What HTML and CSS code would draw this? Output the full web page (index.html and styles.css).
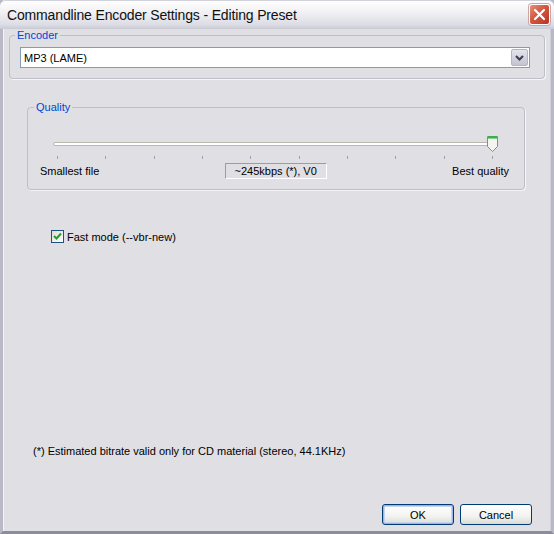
FILE: index.html
```html
<!DOCTYPE html>
<html lang="en">
<head>
    <meta charset="UTF-8">
    <title>Commandline Encoder Settings - Editing Preset</title>
    <link rel="stylesheet" href="styles.css">
</head>
<body>
    <div class="window">
        <div class="titlebar">
            <span class="title">Commandline Encoder Settings - Editing Preset</span>
            <span class="close">
                <svg width="13" height="13" viewBox="0 0 13 13">
                    <path d="M2 2 L11 11 M11 2 L2 11" stroke="#fff" stroke-width="2.2" stroke-linecap="round"/>
                </svg>
            </span>
        </div>

        <div class="client">
            <fieldset class="group encoder">
                <legend>Encoder</legend>
                <div class="combo">
                    <span class="combo-text">MP3 (LAME)</span>
                    <span class="combo-btn">
                        <svg width="9" height="6" viewBox="0 0 9 6">
                            <path d="M1 1 L4.5 4.5 L8 1" stroke="#3c3c50" stroke-width="2" fill="none"/>
                        </svg>
                    </span>
                </div>
            </fieldset>

            <fieldset class="group quality">
                <legend>Quality</legend>
                <div class="slider">
                    <div class="track"></div>
                    <span class="thumb">
                        <svg width="13" height="18" viewBox="0 0 13 18">
                            <path d="M1.5 1.5 H11.5 V11.5 L6.5 16.5 L1.5 11.5 Z" fill="#f4f4f0" stroke="#8a8a80"/>
                            <rect x="2" y="1" width="9" height="3" fill="#3fae4a"/>
                            <rect x="2" y="3" width="9" height="1" fill="#8ad48e"/>
                        </svg>
                    </span>
                </div>
                <div class="ticks">
                    <i></i><i></i><i></i><i></i><i></i><i></i><i></i><i></i><i></i><i></i>
                </div>
                <div class="labels">
                    <span>Smallest file</span>
                    <span class="value">~245kbps (*), V0</span>
                    <span>Best quality</span>
                </div>
            </fieldset>

            <label class="check">
                <span class="box">
                    <svg width="11" height="11" viewBox="0 0 11 11">
                        <path d="M2 5 L4.5 7.5 L9 2.5" stroke="#21a121" stroke-width="2" fill="none"/>
                    </svg>
                </span>
                Fast mode (--vbr-new)
            </label>

            <div class="note">(*) Estimated bitrate valid only for CD material (stereo, 44.1KHz)</div>

            <div class="buttons">
                <button class="button default">OK</button>
                <button class="button">Cancel</button>
            </div>
        </div>
    </div>
</body>
</html>
```

FILE: styles.css
```css
* {
    margin: 0;
    padding: 0;
    box-sizing: border-box;
}

body {
    background: #e0dfe3;
    font-family: "Liberation Sans", Arial, sans-serif;
    font-size: 11px;
    color: #000;
}

.window {
    width: 554px;
    height: 534px;
    display: flex;
    flex-direction: column;
    background: #e0dfe3;
    border-left: 3px solid #b9b9c6;
    border-right: 3px solid #b9b9c6;
    border-bottom: 3px solid #8c8c9c;
    box-shadow: inset 1px 0 0 #f4f4f8, inset -1px 0 0 #cfcfda;
}

/* title bar */
.titlebar {
    height: 29px;
    margin: 0 -3px;
    display: flex;
    align-items: center;
    justify-content: space-between;
    padding: 0 4px 1px 7px;
    background: linear-gradient(#ffffff 0%, #f1f1f4 40%, #dcdce4 85%, #c9c9d4 100%);
    border-top: 1px solid #d2d2dc;
    border-radius: 6px 6px 0 0;
}

.title {
    font-size: 14px;
    color: #101010;
    letter-spacing: -0.15px;
}

.close {
    width: 21px;
    height: 21px;
    display: flex;
    align-items: center;
    justify-content: center;
    border: 1px solid #fff;
    border-radius: 3px;
    background: linear-gradient(135deg, #e8907a 0%, #d5573f 45%, #b93323 100%);
    box-shadow: 0 0 0 1px #c9a6a6;
}

.client {
    flex: 1;
    display: flex;
    flex-direction: column;
    padding: 0 6px 6px 6px;
}

/* group boxes */
.group {
    border: 1px solid #bebec8;
    border-radius: 4px;
    box-shadow: 1px 1px 0 #f6f6f8;
}

.group legend {
    color: #0046d5;
    padding: 0 2px;
    margin-left: -5px;
    line-height: 13px;
}

.encoder {
    padding: 5px 14px 10px 10px;
}

.combo {
    height: 21px;
    display: flex;
    align-items: center;
    background: #fff;
    border: 1px solid #7f9db9;
    padding: 0 1px 0 3px;
}

.combo-text {
    flex: 1;
}

.combo-btn {
    width: 17px;
    height: 17px;
    display: flex;
    align-items: center;
    justify-content: center;
    border-radius: 2px;
    background: linear-gradient(#e4e4ec, #c4c4d2);
    border: 1px solid #b4b4c4;
}

.quality {
    margin: 22px 20px 0 18px;
    padding: 21px 15px 10px 12px;
}

.quality legend {
    margin-left: -6px;
}

.slider {
    position: relative;
    height: 18px;
    margin: 0 12px 0 13px;
    display: flex;
    align-items: center;
}

.track {
    flex: 1;
    height: 4px;
    background: #fff;
    border: 1px solid #b8b8ac;
    border-radius: 2px;
}

.thumb {
    position: absolute;
    right: -2px;
    top: 0;
    height: 18px;
}

.ticks {
    display: flex;
    justify-content: space-between;
    margin: 3px 16px 0 17px;
    height: 3px;
}

.ticks i {
    width: 1px;
    height: 3px;
    background: #a0a0a8;
}

.labels {
    display: flex;
    align-items: center;
    justify-content: space-between;
    margin-top: 4px;
}

.value {
    width: 102px;
    height: 16px;
    line-height: 14px;
    text-align: center;
    border: 1px solid #9c9ca8;
    border-right-color: #fff;
    border-bottom-color: #fff;
}

/* checkbox */
.check {
    display: flex;
    align-items: center;
    gap: 3px;
    margin: 40px 0 0 42px;
}

.box {
    width: 13px;
    height: 13px;
    display: flex;
    align-items: center;
    justify-content: center;
    border: 1px solid #1c5180;
    background: linear-gradient(135deg, #dcdcd6, #fff);
}

.note {
    margin: auto 0 0 24px;
}

.buttons {
    display: flex;
    justify-content: flex-end;
    gap: 6px;
    margin: 47px 13px 0 0;
}

.button {
    width: 72px;
    height: 21px;
    font-family: "Liberation Sans", Arial, sans-serif;
    font-size: 11px;
    color: #000;
    background: linear-gradient(#ffffff 0%, #f2f2f0 60%, #dcdcd6 100%);
    border: 1px solid #003c74;
    border-radius: 3px;
}

.button.default {
    box-shadow: inset 0 0 0 1px #9db4e8, inset 0 0 0 2px #c6d4f2;
}
```
